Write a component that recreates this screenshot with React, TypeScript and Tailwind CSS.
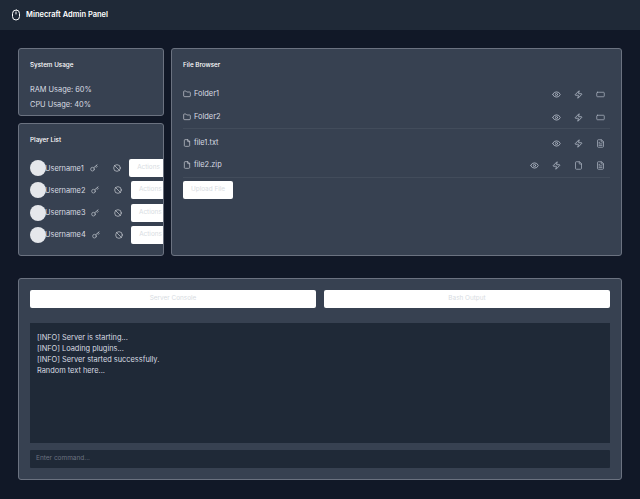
import { Mouse, Folder, File, FileText, Key, Ban, Eye, Zap, RectangleHorizontal } from "lucide-react";

const ic = "text-[#aab2bf] shrink-0";

function Player({ name }: { name: string }) {
  return (
    <div className="flex items-center h-[20px] mb-[2.3px]">
      <div className="w-[16px] h-[16px] rounded-full bg-[#e5e7eb] shrink-0 -mr-[1px]" />
      <span className="pt-[1px] text-[7.4px] leading-[12px] text-[#d8dce2] shrink-0">{name}</span>
      <span className="w-[14px] flex justify-end shrink-0"><Key size={8} className="text-[#c3c8d0]" /></span>
      <span className="w-[23px] flex justify-end shrink-0"><Ban size={8} className="text-[#d1d5db]" /></span>
      <button className="ml-[8.5px] w-[50px] h-[18px] shrink-0 bg-white rounded-[2px] text-[6.4px] text-[#d8dce2] text-left pl-[8px]">Actions</button>
    </div>
  );
}

function Row({ label, kind, extra, spaced }: { label: string; kind: "folder" | "file"; extra?: boolean; spaced?: boolean }) {
  return (
    <div className={spaced ? "flex items-center h-[22px] mb-[1px]" : "flex items-center h-[22px]"}>
      {kind === "folder" ? <Folder size={8} className="text-[#d1d5db] shrink-0" /> : <File size={8} className="text-[#d1d5db] shrink-0" />}
      <span className="ml-[3px] text-[7.4px] leading-[12px] text-[#d8dce2]">{label}</span>
      <div className="ml-auto flex items-center gap-[13px]">
        <Eye size={9} strokeWidth={2.4} className={ic} />
        <Zap size={9} strokeWidth={2.4} className={ic} />
        {extra && <File size={9} className={ic} />}
        {kind === "folder" ? <RectangleHorizontal size={9} className={ic} /> : <FileText size={9} className={ic} />}
      </div>
    </div>
  );
}

export default function App() {
  return (
    <div className="w-[640px] h-[499px] overflow-hidden bg-[#111827] font-['Inter',sans-serif] text-[#d8dce2]">
      <header className="h-[30px] bg-[#1f2937] flex items-center pl-[10px]">
        <Mouse size={12} className="text-white" />
        <h1 className="ml-[4px] text-[7.5px] font-semibold text-white">Minecraft Admin Panel</h1>
      </header>

      <main className="px-[18px] pt-[18px]">
        <div className="flex gap-[7px] h-[208px]">
          <div className="w-[146px] flex flex-col gap-[7px] shrink-0">
            <section className="h-[68px] bg-[#374151] border border-[#6b7280] rounded-[3px] px-[11px] pt-[11px]">
              <h2 className="mt-[1px] text-[6.3px] leading-[9px] font-medium text-white">System Usage</h2>
              <p className="mt-[14px] text-[7.4px] leading-[12px]">RAM Usage: 60%</p>
              <p className="mt-[3px] text-[7.4px] leading-[12px]">CPU Usage: 40%</p>
            </section>
            <section className="flex-1 min-h-0 overflow-hidden bg-[#374151] border border-[#6b7280] rounded-[3px] pl-[11px] pt-[11px]">
              <h2 className="mt-[1px] text-[6.3px] leading-[9px] font-medium text-white mb-[13px]">Player List</h2>
              <Player name="Username1" />
              <Player name="Username2" />
              <Player name="Username3" />
              <Player name="Username4" />
            </section>
          </div>

          <section className="flex-1 bg-[#374151] border border-[#6b7280] rounded-[3px] px-[11px] pt-[11px]">
            <h2 className="mt-[1px] text-[6.3px] leading-[9px] font-medium text-white mb-[13px]">File Browser</h2>
            <div className="border-b border-[#424c5b] pr-[5px]">
              <Row label="Folder1" kind="folder" spaced />
              <Row label="Folder2" kind="folder" />
            </div>
            <div className="border-b border-[#424c5b] mt-[3px] pb-[1px] pr-[5px]">
              <Row label="file1.txt" kind="file" />
              <Row label="file2.zip" kind="file" extra />
            </div>
            <button className="block mt-[3px] w-[50px] h-[18px] bg-white rounded-[2px] text-[6.4px] text-[#d8dce2]">Upload File</button>
          </section>
        </div>

        <section className="mt-[22px] h-[202px] bg-[#374151] border border-[#6b7280] rounded-[3px] px-[11px] pt-[11px]">
          <div className="flex gap-[8px]">
            <button className="flex-1 h-[18px] bg-white rounded-[2px] text-[6.4px] text-[#d8dce2]">Server Console</button>
            <button className="flex-1 h-[18px] bg-white rounded-[2px] text-[6.4px] text-[#d8dce2]">Bash Output</button>
          </div>
          <div className="mt-[15px] h-[120px] bg-[#1f2937] pl-[7px] pt-[8.5px] text-[7.4px] leading-[11.2px] text-[#d8dce2]">
            <p>[INFO] Server is starting...</p>
            <p>[INFO] Loading plugins...</p>
            <p>[INFO] Server started successfully.</p>
            <p>Random text here...</p>
          </div>
          <div className="mt-[7px] h-[18px] bg-[#1f2937] rounded-[1px] flex items-center pl-[6px] text-[6.5px] text-[#6b7280]">Enter command...</div>
        </section>
      </main>
    </div>
  );
}
